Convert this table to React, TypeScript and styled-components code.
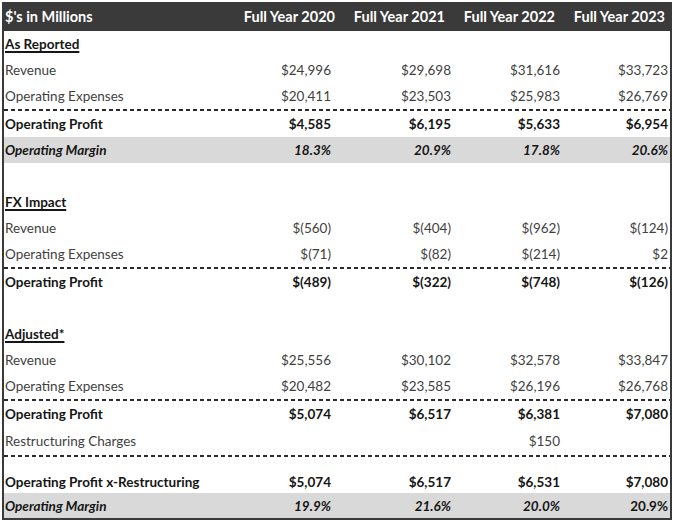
import React from 'react'
import styled, { createGlobalStyle } from 'styled-components'

const GlobalStyle = createGlobalStyle`
  * { box-sizing: border-box; }
  body {
    margin: 0;
    background: #ffffff;
    font-family: Lato, 'Open Sans', sans-serif;
  }
`

const COLS = '236px 93px 120px 109px 108px'
const INK = '#3a3a3a'

// outer frame
const Table = styled.div`
  width: 670px;
  margin: 2px 0 0 2px;
  border: 2px solid ${INK};
  border-top: none;
  font-size: 13.5px;
  color: #3f3f3f;
`

// dark header band
const HeaderRow = styled.div`
  display: grid;
  grid-template-columns: ${COLS};
  align-items: center;
  height: 29px;
  margin: 0 -2px;
  padding: 0 2px;
  background: ${INK};
  color: #ffffff;
  font-weight: 700;
  font-size: 14.5px;
`

const HeadCell = styled.div<{ $shift?: number }>`
  text-align: right;
  white-space: nowrap;
  margin-right: ${p => p.$shift ?? 0}px;
`

const HeadLabel = styled.div`
  padding-left: 1px;
  white-space: nowrap;
`

// a line of the table
const Row = styled.div<{ $h: number; $dashed?: boolean; $shade?: boolean; $padTop?: number }>`
  display: grid;
  grid-template-columns: ${COLS};
  align-items: center;
  height: ${p => p.$h}px;
  padding-top: ${p => p.$padTop ?? (p.$dashed ? 2 : 0)}px;
  background-color: ${p => (p.$shade ? '#d9d9d9' : 'transparent')};
  background-image: ${p =>
    p.$dashed ? `repeating-linear-gradient(90deg, #2a2a2a 0 4px, transparent 4px 7px)` : 'none'};
  background-size: 100% 2px;
  background-repeat: no-repeat;
  background-position: top left;
`

const Label = styled.div<{ $bold?: boolean; $italic?: boolean; $under?: boolean }>`
  padding-left: 1px;
  white-space: nowrap;
  font-weight: ${p => (p.$bold ? 700 : 400)};
  font-style: ${p => (p.$italic ? 'italic' : 'normal')};
  text-decoration: ${p => (p.$under ? 'underline' : 'none')};
  text-decoration-thickness: 1.5px;
  text-underline-offset: 2px;
  color: ${p => (p.$bold ? '#161616' : '#3f3f3f')};
`

const Value = styled.div<{ $bold?: boolean; $italic?: boolean }>`
  text-align: right;
  padding-right: 2px;
  white-space: nowrap;
  font-weight: ${p => (p.$bold ? 700 : 400)};
  font-style: ${p => (p.$italic ? 'italic' : 'normal')};
  color: ${p => (p.$bold ? '#161616' : '#3f3f3f')};
`

type Kind = 'section' | 'line' | 'total' | 'margin' | 'blank'

interface Line {
  kind: Kind
  label?: string
  values?: string[]
  h: number
  dashed?: boolean
  padTop?: number
  upright?: number[] // value indexes that are not italic
}

const rows: Line[] = [
  { kind: 'section', label: 'As Reported', h: 26 },
  { kind: 'line', label: 'Revenue', values: ['$24,996', '$29,698', '$31,616', '$33,723'], h: 26 },
  { kind: 'line', label: 'Operating Expenses', values: ['$20,411', '$23,503', '$25,983', '$26,769'], h: 26 },
  { kind: 'total', label: 'Operating Profit', values: ['$4,585', '$6,195', '$5,633', '$6,954'], h: 28, dashed: true },
  { kind: 'margin', label: 'Operating Margin', values: ['18.3%', '20.9%', '17.8%', '20.6%'], h: 26 },
  { kind: 'blank', h: 26 },
  { kind: 'section', label: 'FX Impact', h: 26 },
  { kind: 'line', label: 'Revenue', values: ['$(560)', '$(404)', '$(962)', '$(124)'], h: 26 },
  { kind: 'line', label: 'Operating Expenses', values: ['$(71)', '$(82)', '$(214)', '$2'], h: 26 },
  { kind: 'total', label: 'Operating Profit', values: ['$(489)', '$(322)', '$(748)', '$(126)'], h: 28, dashed: true },
  { kind: 'blank', h: 26 },
  { kind: 'section', label: 'Adjusted*', h: 26 },
  { kind: 'line', label: 'Revenue', values: ['$25,556', '$30,102', '$32,578', '$33,847'], h: 26 },
  { kind: 'line', label: 'Operating Expenses', values: ['$20,482', '$23,585', '$26,196', '$26,768'], h: 26 },
  { kind: 'total', label: 'Operating Profit', values: ['$5,074', '$6,517', '$6,381', '$7,080'], h: 28, dashed: true },
  { kind: 'line', label: 'Restructuring Charges', values: ['', '', '$150', ''], h: 28 },
  {
    kind: 'total',
    label: 'Operating Profit x-Restructuring',
    values: ['$5,074', '$6,517', '$6,531', '$7,080'],
    h: 38,
    dashed: true,
    padTop: 16,
  },
  { kind: 'margin', label: 'Operating Margin', values: ['19.9%', '21.6%', '20.0%', '20.9%'], h: 25, upright: [3] },
]

const headers = ['Full Year 2020', 'Full Year 2021', 'Full Year 2022', 'Full Year 2023']
const headShift = [-2, 8, 7, 5]

const App: React.FC = () => {
  return (
    <>
      <GlobalStyle />
      <Table>
        <HeaderRow>
          <HeadLabel>$'s in Millions</HeadLabel>
          {headers.map((h, i) => (
            <HeadCell key={h} $shift={headShift[i]}>
              {h}
            </HeadCell>
          ))}
        </HeaderRow>
        {rows.map((r, idx) => {
          const bold = r.kind !== 'line'
          const italic = r.kind === 'margin'
          return (
            <Row key={idx} $h={r.h} $dashed={r.dashed} $padTop={r.padTop} $shade={r.kind === 'margin'}>
              {r.kind !== 'blank' && (
                <Label $bold={bold} $italic={italic} $under={r.kind === 'section'}>
                  {r.label}
                </Label>
              )}
              {r.values?.map((v, i) => (
                <Value key={i} $bold={bold} $italic={italic && !r.upright?.includes(i)}>
                  {v}
                </Value>
              ))}
            </Row>
          )
        })}
      </Table>
    </>
  )
}

export default App
